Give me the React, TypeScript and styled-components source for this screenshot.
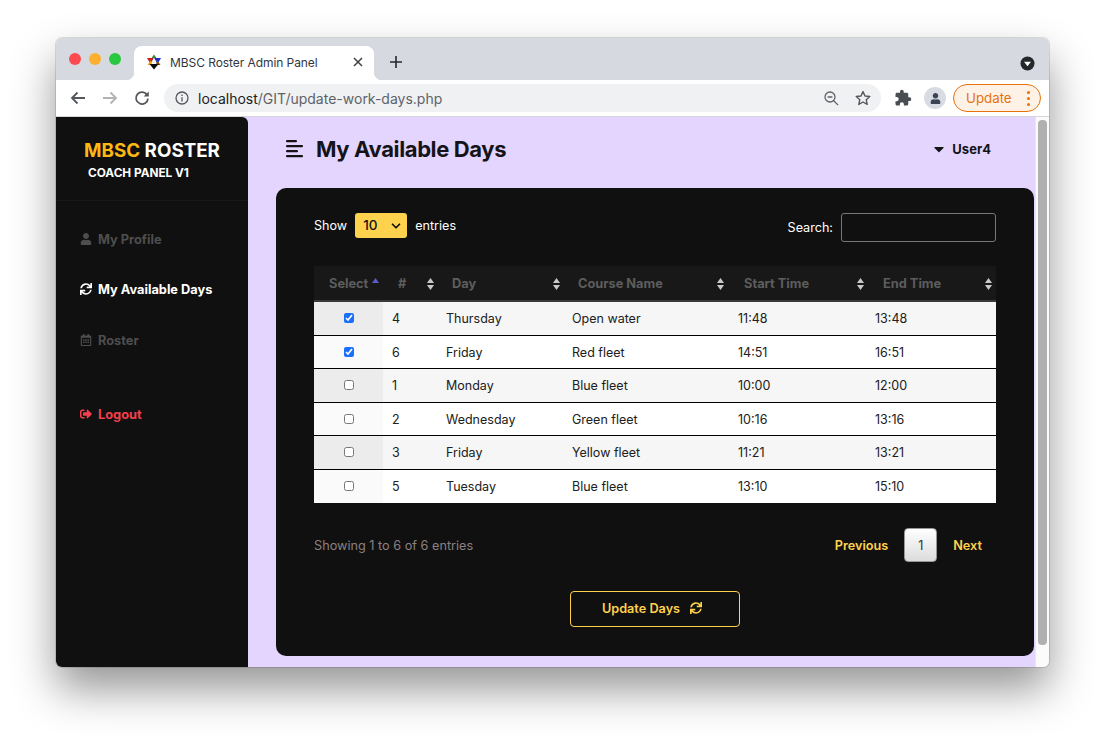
import styled, { createGlobalStyle } from 'styled-components';
import { ChevronDown } from 'lucide-react';
import { FaUser, FaSync, FaRegCalendarAlt, FaSignOutAlt, FaCaretDown } from 'react-icons/fa';
import { MdExtension } from 'react-icons/md';

const GlobalStyle = createGlobalStyle`
  html, body {
    margin: 0;
    padding: 0;
    background: #ffffff;
    height: 741px;
    overflow: hidden;
  }
  * {
    box-sizing: border-box;
  }
  body {
    font-family: Inter, 'Liberation Sans', sans-serif;
  }
`;

const Desktop = styled.div`
  width: 1105px;
  height: 741px;
  padding: 38px 56px 74px;
`;

const BrowserWindow = styled.div`
  height: 629px;
  border-radius: 6px;
  overflow: hidden;
  display: flex;
  flex-direction: column;
  box-shadow: 0 0 0 1px rgba(0, 0, 0, 0.12), 0 22px 44px rgba(0, 0, 0, 0.42);
`;

const TabStrip = styled.div`
  height: 42px;
  flex: none;
  background: #d6d9e0;
  display: flex;
  align-items: flex-end;
  padding-left: 13px;
`;

const TrafficLights = styled.div`
  display: flex;
  gap: 8px;
  align-self: flex-start;
  margin-top: 15px;
  margin-right: 13px;
`;

const Light = styled.span<{ $color: string }>`
  width: 12px;
  height: 12px;
  border-radius: 50%;
  background: ${(p) => p.$color};
`;

const Tab = styled.div`
  position: relative;
  width: 240px;
  height: 34px;
  background: #ffffff;
  border-radius: 8px 8px 0 0;
  display: flex;
  align-items: center;
  padding: 0 11px 2px 12px;
  font-size: 12px;
  letter-spacing: -0.07px;
  color: #33363b;

  &::before,
  &::after {
    content: '';
    position: absolute;
    bottom: 0;
    width: 8px;
    height: 8px;
  }
  &::before {
    left: -8px;
    background: radial-gradient(circle at 0 0, #d6d9e0 8px, #ffffff 8.5px);
  }
  &::after {
    right: -8px;
    background: radial-gradient(circle at 100% 0, #d6d9e0 8px, #ffffff 8.5px);
  }
`;

const TabTitle = styled.span`
  margin-left: 8px;
  flex: 1;
`;

const NewTab = styled.div`
  margin-left: 16px;
  height: 34px;
  padding-bottom: 2px;
  display: flex;
  align-items: center;
`;

const MediaDot = styled.div`
  margin-left: auto;
  margin-right: 14px;
  align-self: center;
  margin-top: 8px;
  display: flex;
`;

const Toolbar = styled.div`
  height: 37px;
  flex: none;
  background: #ffffff;
  border-bottom: 1px solid #d3d5da;
  display: flex;
  align-items: center;
  padding: 0 8px 0 14px;
`;

const NavIcons = styled.div`
  display: flex;
  gap: 16px;
  align-items: center;
  margin-right: 14px;
`;

const Omnibox = styled.div`
  width: 717px;
  height: 28px;
  border-radius: 14px;
  background: #eff1f3;
  display: flex;
  align-items: center;
  padding: 0 10px 0 11px;
  font-size: 14px;
  color: #5f6368;
`;

const UrlText = styled.div`
  margin-left: 9px;
  flex: 1;
  b {
    font-weight: 400;
    color: #202124;
  }
`;

const OmniIcons = styled.div`
  display: flex;
  gap: 16px;
  align-items: center;
`;

const ExtIcons = styled.div`
  display: flex;
  align-items: center;
  margin-left: 13px;
  gap: 12px;
`;

const Avatar = styled.div`
  width: 22px;
  height: 22px;
  border-radius: 50%;
  background: #d8dbe2;
  display: flex;
  align-items: center;
  justify-content: center;
  color: #3c4352;
  font-size: 11px;
`;

const UpdatePill = styled.div`
  width: 88px;
  height: 28px;
  margin-left: 7px;
  border: 1px solid #e8710a;
  border-radius: 14px;
  background: #fef2e7;
  color: #e8710a;
  font-size: 13.3px;
  display: flex;
  align-items: center;
  justify-content: space-between;
  padding: 0 10px 0 12px;
`;

const KebabDots = styled.div`
  display: flex;
  flex-direction: column;
  gap: 3px;
  span {
    width: 3px;
    height: 3px;
    border-radius: 50%;
    background: #e8710a;
  }
`;

const AppShell = styled.div`
  flex: 1;
  min-height: 0;
  display: flex;
  background: #e3d5fd;
`;

const Sidebar = styled.aside`
  width: 192px;
  flex: none;
  background: #101010;
  border-top-right-radius: 6px;
`;

const Brand = styled.div`
  height: 84px;
  border-bottom: 1px solid #181818;
  padding: 23px 0 0 28px;
`;

const BrandName = styled.div`
  font-size: 18.8px;
  line-height: 22px;
  font-weight: 700;
  color: #ffffff;
  span {
    color: #fdb913;
  }
`;

const BrandSub = styled.div`
  font-size: 11.8px;
  line-height: 14px;
  font-weight: 700;
  color: #ffffff;
  margin: 4px 0 0 4px;
`;

const SideNav = styled.nav`
  display: flex;
  flex-direction: column;
  padding: 28px 0 0 24px;
`;

const SideItem = styled.div<{ $color: string; $after: number }>`
  display: flex;
  align-items: center;
  gap: 6px;
  height: 20px;
  margin-bottom: ${(p) => p.$after}px;
  font-size: 12.8px;
  font-weight: 700;
  color: ${(p) => p.$color};
  svg {
    width: 12px;
    height: 12px;
  }
`;

const Main = styled.main`
  flex: 1;
  min-width: 0;
  padding-left: 28px;
  padding-right: 1px;
`;

const TopBar = styled.header`
  height: 71px;
  display: flex;
  align-items: center;
  padding: 0 43px 7px 10px;
  color: #141418;
`;

const PageTitle = styled.h1`
  margin: 0 0 0 13px;
  flex: 1;
  font-size: 22px;
  font-weight: 700;
  letter-spacing: -0.38px;
`;

const UserMenu = styled.div`
  display: flex;
  align-items: center;
  gap: 5px;
  font-size: 13px;
  font-weight: 700;
`;

const Card = styled.section`
  height: 468px;
  background: #101010;
  border-radius: 10px;
  padding: 25px 38px 0;
  color: #ffffff;
  font-size: 12.6px;
`;

const Controls = styled.div`
  display: flex;
  justify-content: space-between;
  align-items: center;
  height: 29px;
`;

const LengthLabel = styled.label`
  display: flex;
  align-items: center;
  gap: 8px;
  margin-top: -5px;
`;

const SelectWrap = styled.span`
  position: relative;
  display: inline-flex;
  svg {
    position: absolute;
    right: 4px;
    top: 6px;
    pointer-events: none;
    color: #111111;
  }
`;

const LengthSelect = styled.select`
  appearance: none;
  width: 52px;
  height: 25px;
  border: 0;
  border-radius: 3px;
  background: #ffd24d;
  color: #111111;
  font: 500 13.5px Inter, sans-serif;
  padding-left: 8px;
`;

const SearchLabel = styled.label`
  display: flex;
  align-items: center;
  gap: 8px;
`;

const SearchInput = styled.input`
  width: 155px;
  height: 29px;
  background: transparent;
  border: 1px solid #77787a;
  border-radius: 3px;
`;

const Table = styled.table`
  width: 682px;
  margin-top: 24px;
  table-layout: fixed;
  border-collapse: separate;
  border-spacing: 0;
`;

const Th = styled.th<{ $width: number; $inset: number }>`
  position: relative;
  width: ${(p) => p.$width}px;
  height: 36px;
  padding: 0 0 0 ${(p) => p.$inset}px;
  background: #181818;
  border-bottom: 2px solid #3a3a3a;
  color: #5d5d5d;
  font-size: 12.8px;
  font-weight: 700;
  text-align: left;
`;

const SortMark = styled.svg<{ $right: number }>`
  position: absolute;
  right: ${(p) => p.$right}px;
  top: 12px;
`;

const AscMark = styled.svg`
  position: absolute;
  left: 58px;
  top: 12px;
`;

const Tr = styled.tr`
  &:nth-child(odd) td {
    background: #f6f6f6;
  }
  &:nth-child(even) td {
    background: #ffffff;
  }
  &:nth-child(odd) td:first-child {
    background: #ececec;
  }
  &:nth-child(even) td:first-child {
    background: #fafafa;
  }
  &:last-child td {
    border-bottom: 0;
  }
`;

const Td = styled.td`
  height: 33.5px;
  padding: 1px 0 0 9px;
  border-bottom: 1px solid #000000;
  color: #202020;
  font-size: 12.5px;
`;

const CheckCell = styled(Td)`
  padding: 0 0 2px;
  text-align: center;
  input {
    width: 10px;
    height: 10px;
    margin: 0;
    accent-color: #1a6ffb;
    vertical-align: middle;
  }
`;

const Footer = styled.div`
  display: flex;
  justify-content: space-between;
  align-items: center;
  margin-top: 25px;
`;

const Info = styled.div`
  color: #8d8080;
  font-size: 12.7px;
`;

const Pager = styled.div`
  display: flex;
  align-items: center;
  color: #ffd24d;
  font-weight: 600;
  font-size: 12.7px;
  padding-right: 14px;
`;

const PageButton = styled.div`
  width: 33px;
  height: 34px;
  margin: 0 16px;
  border: 1px solid #979797;
  border-radius: 4px;
  background: linear-gradient(to bottom, #ffffff, #dcdcdc);
  color: #333333;
  font-weight: 400;
  display: flex;
  align-items: center;
  justify-content: center;
`;

const Actions = styled.div`
  display: flex;
  justify-content: center;
  margin-top: 29px;
`;

const UpdateButton = styled.button`
  width: 170px;
  height: 36px;
  padding: 0 6px 2px 0;
  background: transparent;
  border: 1px solid #ffd24d;
  border-radius: 4px;
  color: #ffd24d;
  font: 600 12.7px Inter, sans-serif;
  display: flex;
  align-items: center;
  justify-content: center;
  gap: 10px;
  svg {
    width: 12px;
    height: 12px;
  }
`;

const ScrollTrack = styled.div`
  width: 14px;
  flex: none;
  background: #fbfbfb;
  border-left: 1px solid #e8e8e8;
  padding: 3px 2px 0 2px;
`;

const ScrollThumb = styled.div`
  height: 525px;
  border-radius: 4px;
  background: #b0b0b0;
`;

const columns = [
  { label: 'Select', width: 69, inset: 15, right: -99 },
  { label: '#', width: 54, inset: 15, right: 3 },
  { label: 'Day', width: 126, inset: 15, right: 3 },
  { label: 'Course Name', width: 166, inset: 15, right: 5 },
  { label: 'Start Time', width: 137, inset: 15, right: 2 },
  { label: 'End Time', width: 130, inset: 17, right: 4 },
];

const rows = [
  { checked: true, id: 4, day: 'Thursday', course: 'Open water', start: '11:48', end: '13:48' },
  { checked: true, id: 6, day: 'Friday', course: 'Red fleet', start: '14:51', end: '16:51' },
  { checked: false, id: 1, day: 'Monday', course: 'Blue fleet', start: '10:00', end: '12:00' },
  { checked: false, id: 2, day: 'Wednesday', course: 'Green fleet', start: '10:16', end: '13:16' },
  { checked: false, id: 3, day: 'Friday', course: 'Yellow fleet', start: '11:21', end: '13:21' },
  { checked: false, id: 5, day: 'Tuesday', course: 'Blue fleet', start: '13:10', end: '15:10' },
];

const Favicon = () => (
  <svg width="16" height="16" viewBox="0 0 16 16">
    <polygon points="1,4 8,4 4.5,10" fill="#c8201e" />
    <polygon points="8,4 15,4 11.5,10" fill="#1b2fc4" />
    <polygon points="8,0.5 5.5,4 10.5,4" fill="#3a8a2a" />
    <polygon points="8,4 5,9.5 11,9.5" fill="#f4f4f4" />
    <polygon points="1.5,11 5,6 6,11" fill="#e8a010" />
    <polygon points="14.5,11 11,6 10,11" fill="#7a4a12" />
    <polygon points="3.5,10 12.5,10 8,15.5" fill="#0b0b0b" />
  </svg>
);

const CloseIcon = () => (
  <svg width="10" height="10" viewBox="0 0 10 10" stroke="#3c4043" strokeWidth="1.5" fill="none">
    <path d="M1 1l8 8M9 1l-8 8" />
  </svg>
);

const PlusIcon = () => (
  <svg width="12" height="12" viewBox="0 0 12 12" stroke="#26282c" strokeWidth="1.6" fill="none">
    <path d="M6 0v12M0 6h12" />
  </svg>
);

const TabMenuIcon = () => (
  <svg width="15" height="15" viewBox="0 0 15 15">
    <circle cx="7.5" cy="7.5" r="7" fill="#25272b" />
    <polygon points="4,5.8 11,5.8 7.5,10.2" fill="#ffffff" />
  </svg>
);

const ArrowIcon = ({ flip, color }: { flip?: boolean; color: string }) => (
  <svg width="16" height="14" viewBox="0 0 16 14" stroke={color} strokeWidth="1.8" fill="none" style={flip ? { transform: 'scaleX(-1)' } : undefined}>
    <path d="M15 7H2M7.5 1.5L2 7l5.5 5.5" />
  </svg>
);

const ReloadIcon = () => (
  <svg width="16" height="16" viewBox="0 0 16 16" fill="none">
    <path d="M13.2 5A6 6 0 1 0 14 8.6" stroke="#54575c" strokeWidth="1.8" />
    <polygon points="14.8,1.4 14.8,6.6 9.6,6.6" fill="#54575c" />
  </svg>
);

const InfoIcon = () => (
  <svg width="14" height="14" viewBox="0 0 14 14" fill="none" stroke="#54575c" strokeWidth="1.3">
    <circle cx="7" cy="7" r="6" />
    <path d="M7 6.2V10.4M7 3.6V5" />
  </svg>
);

const ZoomOutIcon = () => (
  <svg width="15" height="15" viewBox="0 0 15 15" fill="none" stroke="#5f6368" strokeWidth="1.3">
    <circle cx="6" cy="6" r="5" />
    <path d="M3.6 6h4.8M9.7 9.7l4.4 4.4" />
  </svg>
);

const StarIcon = () => (
  <svg width="16" height="16" viewBox="0 0 16 16" fill="none" stroke="#54575c" strokeWidth="1.4" strokeLinejoin="round">
    <polygon points="8,1.6 10,6 14.8,6.5 11.2,9.7 12.2,14.4 8,12 3.8,14.4 4.8,9.7 1.2,6.5 6,6" />
  </svg>
);

const AlignIcon = () => (
  <svg width="17" height="18" viewBox="0 0 17 18" fill="#141418">
    <rect x="0" y="0" width="11" height="2.2" rx="1" />
    <rect x="0" y="5" width="17" height="2.2" rx="1" />
    <rect x="0" y="10" width="12" height="2.2" rx="1" />
    <rect x="0" y="15" width="17" height="2.2" rx="1" />
  </svg>
);

const BothCarets = ({ right }: { right: number }) => (
  <SortMark $right={right} width="7" height="12" viewBox="0 0 7 12" fill="#c9c9c9">
    <polygon points="3.5,0 7,5 0,5" />
    <polygon points="0,7 7,7 3.5,12" />
  </SortMark>
);

const UpCaret = () => (
  <AscMark width="7" height="5" viewBox="0 0 7 5" fill="#5a5ac8">
    <polygon points="3.5,0 7,5 0,5" />
  </AscMark>
);

export default function App() {
  return (
    <>
      <GlobalStyle />
      <Desktop>
        <BrowserWindow>
          <TabStrip>
            <TrafficLights>
              <Light $color="#fc4b50" />
              <Light $color="#fdb02e" />
              <Light $color="#2ac840" />
            </TrafficLights>
            <Tab>
              <Favicon />
              <TabTitle>MBSC Roster Admin Panel</TabTitle>
              <CloseIcon />
            </Tab>
            <NewTab>
              <PlusIcon />
            </NewTab>
            <MediaDot>
              <TabMenuIcon />
            </MediaDot>
          </TabStrip>
          <Toolbar>
            <NavIcons>
              <ArrowIcon color="#54575c" />
              <ArrowIcon flip color="#b1b3b7" />
              <ReloadIcon />
            </NavIcons>
            <Omnibox>
              <InfoIcon />
              <UrlText>
                <b>localhost</b>/GIT/update-work-days.php
              </UrlText>
              <OmniIcons>
                <ZoomOutIcon />
                <StarIcon />
              </OmniIcons>
            </Omnibox>
            <ExtIcons>
              <MdExtension size={18} color="#4a4d52" />
              <Avatar>
                <FaUser />
              </Avatar>
            </ExtIcons>
            <UpdatePill>
              Update
              <KebabDots>
                <span />
                <span />
                <span />
              </KebabDots>
            </UpdatePill>
          </Toolbar>
          <AppShell>
            <Sidebar>
              <Brand>
                <BrandName>
                  <span>MBSC</span> ROSTER
                </BrandName>
                <BrandSub>COACH PANEL V1</BrandSub>
              </Brand>
              <SideNav>
                <SideItem $color="#4e4e4e" $after={30}>
                  <FaUser />
                  My Profile
                </SideItem>
                <SideItem $color="#ffffff" $after={31}>
                  <FaSync />
                  My Available Days
                </SideItem>
                <SideItem $color="#4e4e4e" $after={54}>
                  <FaRegCalendarAlt />
                  Roster
                </SideItem>
                <SideItem $color="#f23f4c" $after={0}>
                  <FaSignOutAlt />
                  Logout
                </SideItem>
              </SideNav>
            </Sidebar>
            <Main>
              <TopBar>
                <AlignIcon />
                <PageTitle>My Available Days</PageTitle>
                <UserMenu>
                  <FaCaretDown size={16} />
                  User4
                </UserMenu>
              </TopBar>
              <Card>
                <Controls>
                  <LengthLabel>
                    Show
                    <SelectWrap>
                      <LengthSelect defaultValue="10">
                        <option value="10">10</option>
                        <option value="25">25</option>
                      </LengthSelect>
                      <ChevronDown size={14} strokeWidth={3} />
                    </SelectWrap>
                    entries
                  </LengthLabel>
                  <SearchLabel>
                    Search:
                    <SearchInput />
                  </SearchLabel>
                </Controls>
                <Table>
                  <thead>
                    <tr>
                      {columns.map((c, i) => (
                        <Th key={c.label} $width={c.width} $inset={c.inset}>
                          {c.label}
                          {i === 0 ? <UpCaret /> : <BothCarets right={c.right} />}
                        </Th>
                      ))}
                    </tr>
                  </thead>
                  <tbody>
                    {rows.map((r) => (
                      <Tr key={r.id}>
                        <CheckCell>
                          <input type="checkbox" defaultChecked={r.checked} />
                        </CheckCell>
                        <Td>{r.id}</Td>
                        <Td>{r.day}</Td>
                        <Td>{r.course}</Td>
                        <Td>{r.start}</Td>
                        <Td>{r.end}</Td>
                      </Tr>
                    ))}
                  </tbody>
                </Table>
                <Footer>
                  <Info>Showing 1 to 6 of 6 entries</Info>
                  <Pager>
                    Previous
                    <PageButton>1</PageButton>
                    Next
                  </Pager>
                </Footer>
                <Actions>
                  <UpdateButton>
                    Update Days
                    <FaSync />
                  </UpdateButton>
                </Actions>
              </Card>
            </Main>
            <ScrollTrack>
              <ScrollThumb />
            </ScrollTrack>
          </AppShell>
        </BrowserWindow>
      </Desktop>
    </>
  );
}
